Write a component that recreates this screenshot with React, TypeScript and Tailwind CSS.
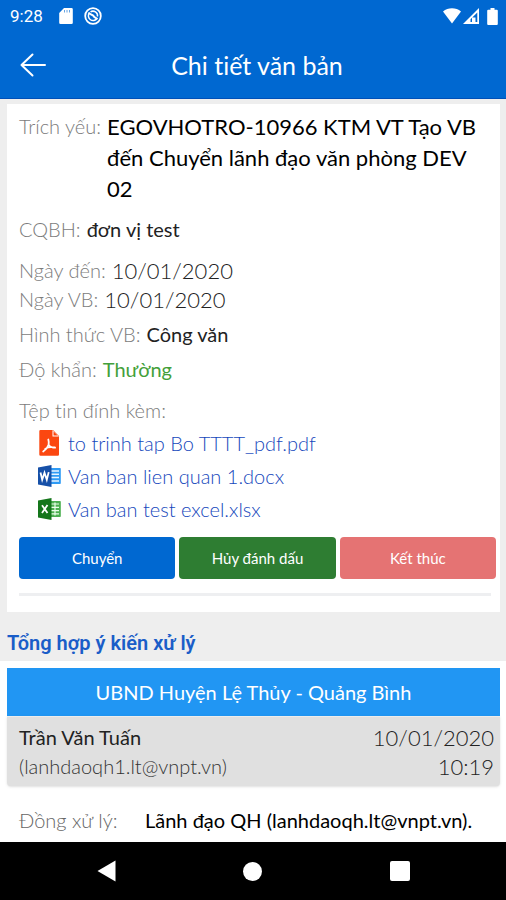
import type { ReactNode } from "react";

type FileType = "pdf" | "word" | "excel";

type Attachment = {
  name: string;
  type: FileType;
};

const attachments: Attachment[] = [
  { name: "to trinh tap Bo TTTT_pdf.pdf", type: "pdf" },
  { name: "Van ban lien quan 1.docx", type: "word" },
  { name: "Van ban test excel.xlsx", type: "excel" }
];

const actions = [
  { label: "Chuyển", className: "bg-[#0068d1]" },
  { label: "Hủy đánh dấu", className: "bg-[#2e7d32]" },
  { label: "Kết thúc", className: "bg-[#e57373]" }
];

function StatusBar() {
  return (
    <div className="flex items-center justify-between h-8 pl-[10px] pr-2">
      <div className="flex items-center">
        <span className="font-['Roboto',sans-serif] text-[17px] leading-8 w-[49px]">9:28</span>
        {/* SD card */}
        <svg className="w-[14px] h-4 mr-[11px]" viewBox="0 0 14 16" fill="currentColor">
          <path d="M5 0h7.500a1.300 1.300 0 011.300 1.300v13.400a1.300 1.300 0 01-1.300 1.300H1.500A1.300 1.300 0 01.2 14.700V5z" />
          <path d="M5.500 2v2.500M8 2v2.500M10.500 2v2.500" stroke="#0068d1" strokeWidth="1" opacity="0.600" />
        </svg>
        <svg
          className="w-[18px] h-[18px]"
          viewBox="0 0 18 18"
          fill="none"
          stroke="currentColor"
          strokeWidth="1.800"
        >
          <circle cx="9" cy="9" r="7.800" />
          <path d="M5.200 6.200A4.600 4.600 0 1 0 13 11.500M6.500 4.900A4.600 4.600 0 0 1 13.500 9.500" strokeWidth="1.500" />
          <path d="M4.500 5.500c2 3 4 1.500 5 3.500s2.500 1.500 4 3" strokeWidth="2" />
        </svg>
      </div>
      <div className="flex items-center">
        {/* Wifi */}
        <svg className="w-[18px] h-4 mr-[2px]" viewBox="0 0 18 16" fill="currentColor">
          <path d="M0 3.500C5-.8 13-.8 18 3.500L9 15.500z" />
        </svg>
        {/* Signal */}
        <svg className="w-4 h-4 mr-2" viewBox="0 0 16 16" fill="currentColor" fillRule="evenodd">
          <path d="M16 0v16H0zM14.300 4.500L7.500 11.200v2.800H9V9.500h3.500v4.500h1.800z" />
        </svg>
        {/* Battery */}
        <svg className="w-[11px] h-[17px]" viewBox="0 0 11 17" fill="currentColor">
          <path d="M3.500 0h4v1.800h2.300a1 1 0 011 1V16a1 1 0 01-1 1H1.200a1 1 0 01-1-1V2.800a1 1 0 011-1h2.300z" />
        </svg>
      </div>
    </div>
  );
}

function FileIcon({ type }: { type: FileType }) {
  if (type === "pdf") {
    return (
      <svg className="w-[23px] h-[26px]" viewBox="0 0 23 26">
        <path d="M2.500 0h12.500l6 6v18.500a1.200 1.200 0 01-1.200 1.200H2.500a1.200 1.200 0 01-1.200-1.200V1.200A1.200 1.200 0 012.500 0z" fill="#fb4710" />
        <path d="M14.500 0v6.500H21z" fill="#fff" />
        <path d="M15.500 1.200v4.300h4.300z" fill="#fb4710" />
        <path
          d="M10.300 9.500c.6 2 .7 3 .3 5.200-1 2.800-3 5.300-5.400 6.800M10.600 14.700c1.300 2 3.500 3 6.500 3M7.300 18.800c2.500-1.700 5.500-2 9.500-1.300"
          fill="none"
          stroke="#fff"
          strokeWidth="1.800"
          strokeLinecap="round"
        />
      </svg>
    );
  }

  if (type === "word") {
    return (
      <svg className="w-[23px] h-[22px]" viewBox="0 0 23 22">
        <path d="M12 3h10a.8.8 0 01.8.8v14.400a.8.8 0 01-.8.8H12z" fill="#2f9bf5" />
        <path d="M13 6h8M13 9.300h8M13 12.600h8M13 15.900h8" stroke="#e8f4ff" strokeWidth="1.500" />
        <path d="M0 2.500L13.500 0v22L0 19.500z" fill="#1650a8" />
        <path d="M2.500 7.500l1.700 7.200 2.300-7 2.300 7 1.900-7.600" fill="none" stroke="#fff" strokeWidth="1.800" />
      </svg>
    );
  }

  return (
    <svg className="w-[23px] h-[22px]" viewBox="0 0 23 22">
      <path d="M12 3h10a.8.8 0 01.8.8v14.400a.8.8 0 01-.8.8H12z" fill="#4caf50" />
      <path d="M12.500 6h8.500M12.500 9.300h8.500M12.500 12.600h8.500M12.500 15.900h8.500M17 4.500v13" stroke="#eaffea" strokeWidth="1.200" />
      <path d="M0 2.500L13.500 0v22L0 19.500z" fill="#14761b" />
      <path d="M4 7.200l5.500 7.800M9.500 7L4 15" fill="none" stroke="#fff" strokeWidth="1.800" />
    </svg>
  );
}

type InfoRowProps = {
  label: string;
  className?: string;
  children: ReactNode;
};

function InfoRow({ label, className = "", children }: InfoRowProps) {
  return (
    <div className={`flex gap-[6px] text-xl leading-[29px] ${className}`}>
      <dt className="font-light text-[#7c7c7c]">{label}</dt>
      <dd>{children}</dd>
    </div>
  );
}

function DateText({ value }: { value: string }) {
  return <time className="block text-[22px] leading-[29px] font-light">{value}</time>;
}

export default function App() {
  return (
    <div className="min-h-screen flex flex-col bg-[#eeeeee] text-[#222] font-['Lato','Noto_Sans',sans-serif] [font-variant-ligatures:none]">
      <header className="bg-[#0068d1] text-white border-b border-[#0050b8]">
        <StatusBar />
        <div className="grid grid-cols-[48px_1fr_40px] items-center h-[66px] px-[9px]">
          <button type="button" aria-label="Quay lại" className="flex justify-center">
            <svg
              className="w-[26px] h-6"
              viewBox="0 0 26 24"
              fill="none"
              stroke="currentColor"
              strokeWidth="2"
              strokeLinecap="round"
              strokeLinejoin="round"
            >
              <path d="M25 12H1.500M12.500 1.500L1.500 12l11 10.500" />
            </svg>
          </button>
          <h1 className="text-center text-[25px] leading-8">Chi tiết văn bản</h1>
        </div>
      </header>

      <section className="ml-[7px] mr-[6px] mt-[5px] pt-[7px] pb-4 bg-white">
        <dl className="px-3">
          <div className="flex gap-[6px] leading-[31px]">
            <dt className="shrink-0 text-xl leading-[31px] font-light text-[#7c7c7c]">Trích yếu:</dt>
            <dd className="text-[22px] leading-[31px] text-black">
              EGOVHOTRO-10966 KTM VT Tạo VB đến Chuyển lãnh đạo văn phòng DEV 02
            </dd>
          </div>
          <InfoRow label="CQBH:" className="mt-[11px]">đơn vị test</InfoRow>
          <InfoRow label="Ngày đến:" className="mt-3">
            <DateText value="10/01/2020" />
          </InfoRow>
          <InfoRow label="Ngày VB:">
            <DateText value="10/01/2020" />
          </InfoRow>
          <InfoRow label="Hình thức VB:" className="mt-[6px]">Công văn</InfoRow>
          <InfoRow label="Độ khẩn:" className="mt-[6px]">
            <span className="text-[#43a03a]">Thường</span>
          </InfoRow>
        </dl>

        {/* Attachments */}
        <h2 className="mt-3 px-3 text-xl leading-[29px] font-light text-[#7c7c7c]">Tệp tin đính kèm:</h2>
        <ul className="mt-px pl-[31px]">
          {attachments.map((file) => (
            <li key={file.name}>
              <a href="#" className="flex items-center gap-[7px] h-[33px] text-xl font-light text-[#1648bc]">
                <FileIcon type={file.type} />
                <span>{file.name}</span>
              </a>
            </li>
          ))}
        </ul>

        {/* Actions */}
        <div className="grid grid-cols-3 gap-1 mt-3 pl-3 pr-1">
          {actions.map((action) => (
            <button
              key={action.label}
              type="button"
              className={`h-[42px] rounded text-white text-[15px] ${action.className}`}
            >
              {action.label}
            </button>
          ))}
        </div>
        <hr className="mt-[14px] ml-3 mr-[9px] border-t-[3px] border-[#eeeff1]" />
      </section>

      <h2 className="px-[7px] pt-[17px] pb-1 font-['Roboto',sans-serif] font-semibold text-xl leading-7 text-[#1a5dc8]">
        Tổng hợp ý kiến xử lý
      </h2>

      <section className="flex-1 pl-[7px] pr-[6px] pt-[7px] bg-white">
        <h3 className="bg-[#2196f3] text-white text-center text-xl leading-[48px]">
          UBND Huyện Lệ Thủy - Quảng Bình
        </h3>
        <div className="flex justify-between pl-3 pr-[6px] pt-[6px] pb-[5px] rounded-b-sm bg-[#e0e0e0] border-t border-[#ececec] shadow-sm text-xl leading-[29px]">
          <div>
            <p>Trần Văn Tuấn</p>
            <p className="font-light text-[#333]">(lanhdaoqh1.lt@vnpt.vn)</p>
          </div>
          <div className="text-right">
            <DateText value="10/01/2020" />
            <DateText value="10:19" />
          </div>
        </div>
        <dl className="flex mt-5 px-3 text-xl leading-[29px]">
          <dt className="w-[126px] font-light text-[#666]">Đồng xử lý:</dt>
          <dd className="text-black">Lãnh đạo QH (lanhdaoqh.lt@vnpt.vn).</dd>
        </dl>
      </section>

      <nav className="grid grid-cols-3 items-center h-[58px] px-[33px] bg-black text-white">
        <button type="button" aria-label="Back" className="flex justify-center">
          <svg className="w-[19px] h-[22px]" viewBox="0 0 19 22" fill="currentColor">
            <path d="M18.500.5v21L.5 11z" />
          </svg>
        </button>
        <button type="button" aria-label="Home" className="flex justify-center">
          <span className="w-[19px] h-[19px] rounded-full bg-white" />
        </button>
        <button type="button" aria-label="Recent apps" className="flex justify-center">
          <span className="w-5 h-5 rounded-xs bg-white" />
        </button>
      </nav>
    </div>
  );
}
